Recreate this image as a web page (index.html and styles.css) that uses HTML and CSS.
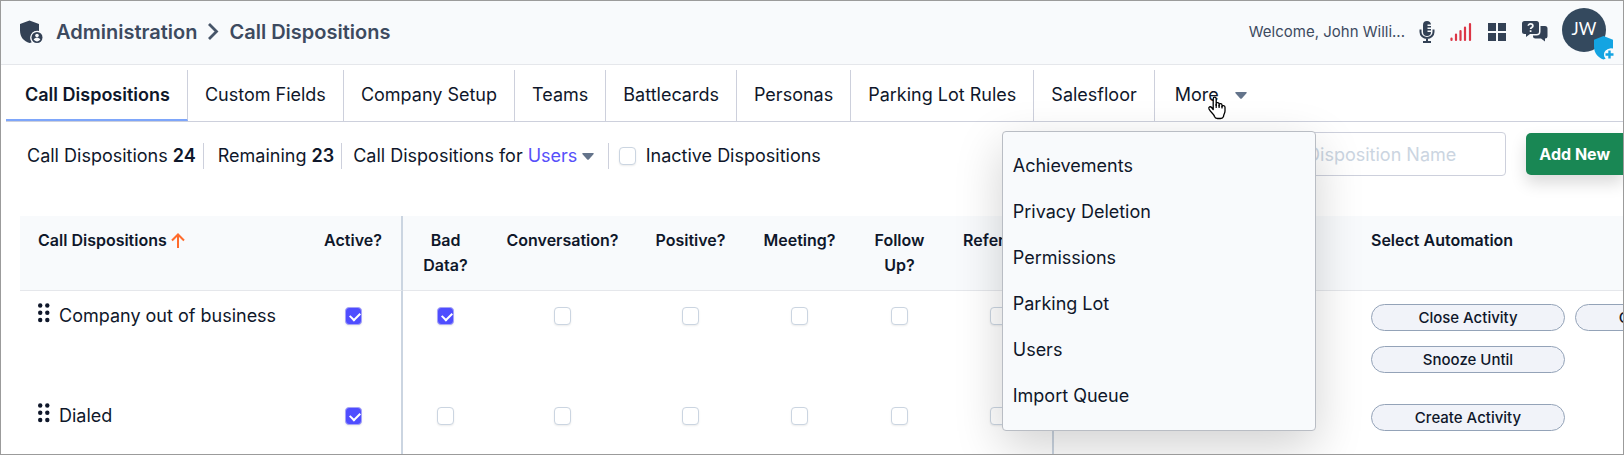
FILE: index.html
```html
<!DOCTYPE html>
<html lang="en">
<head>
<meta charset="utf-8">
<title>Administration - Call Dispositions</title>
<link rel="stylesheet" href="styles.css">
</head>
<body>
<div class="frame">
  <header class="topbar">
    <svg class="topbar-logo" width="24" height="24" viewBox="0 0 24 24" aria-hidden="true">
      <path fill="#334155" d="M10.500 0.500 1 4v6.500C1 17 5 21.500 10.500 23c.8-.2 1.500-.5 2.200-.8A7.200 7.200 0 0 1 20 11V4z"/>
      <circle cx="18" cy="17.500" r="6.600" fill="#f8fafc"/>
      <circle cx="18" cy="17.500" r="5.500" fill="#334155"/>
      <circle cx="18" cy="15.600" r="1.800" fill="#f8fafc"/>
      <path fill="#f8fafc" d="M14.600 19.600c.7-1.300 2-1.800 3.400-1.800s2.700.5 3.400 1.800A4 4 0 0 1 18 21.400a4 4 0 0 1-3.400-1.800z"/>
    </svg>
    <h1 class="crumbs">
      <span>Administration</span>
      <svg width="12" height="18" viewBox="0 0 12 18" aria-hidden="true"><path d="M2 1l7.500 7.500L2 16" fill="none" stroke="#475569" stroke-width="2.800"/></svg>
      <span>Call Dispositions</span>
    </h1>
    <div class="topbar-right">
      <span class="welcome">Welcome, John Willi...</span>
      <svg class="icon-mic" width="16" height="22" viewBox="0 0 16 22" aria-hidden="true">
        <path fill="#334155" d="M8 0a4 4 0 0 0-4 4v7a4 4 0 0 0 8 0H8.500V9.500H12V8H8.500V6.500H12V5H8.500V3.500H12A4 4 0 0 0 8 0z"/>
        <path d="M1.500 8.500V11a6.500 6 0 0 0 13 0V8.500M8 17v3.500M4 21h8" fill="none" stroke="#334155" stroke-width="2"/>
      </svg>
      <svg class="icon-signal" width="22" height="20" viewBox="0 0 22 20" aria-hidden="true"><path d="M1.500 16.500V18M6 12.500V18M10.500 9v9M15 5.500V18M20 2v16" stroke="#dc3545" stroke-width="2.200" stroke-linecap="round"/></svg>
      <svg class="icon-grid" width="18" height="18" viewBox="0 0 18 18" aria-hidden="true"><path fill="#334155" d="M0 0h8v8H0zM10 0h8v8h-8zM0 10h8v8H0zM10 10h8v8h-8z"/></svg>
      <svg class="icon-chat" width="26" height="21" viewBox="0 0 26 21" aria-hidden="true">
        <path fill="#334155" d="M2.500 0h12A2.500 2.500 0 0 1 17 2.500v8a2.500 2.500 0 0 1-2.500 2.500H8l-4 3v-3H2.500A2.500 2.500 0 0 1 0 10.500v-8A2.500 2.500 0 0 1 2.500 0z"/>
        <path fill="#334155" d="M18.500 5H23a2.500 2.500 0 0 1 2.500 2.500V15a2.500 2.500 0 0 1-2.500 2.500v3l-4-3h-5.500A2.500 2.500 0 0 1 11 15v-.5h3.500a4 4 0 0 0 4-4z"/>
        <path d="M6.300 4.800c0-2.500 4.600-2.500 4.600.2 0 1.500-2.300 1.500-2.300 3M8.600 9.300V11" fill="none" stroke="#f8fafc" stroke-width="1.700"/>
      </svg>
      <div class="avatar">JW
        <svg class="avatar-badge" width="21" height="24" viewBox="0 0 21 24" aria-hidden="true">
          <path fill="#14a4e2" d="M9.500 0 0 3.800v6.700C0 17 4 21.500 9.500 23.500c.9-.3 1.700-.6 2.400-1A6.500 6.500 0 0 1 19 12.500V3.800z"/>
          <circle cx="15.500" cy="18.500" r="5.500" fill="#f8fafc"/>
          <path d="M15.500 14.500v8M11.500 18.500h8" stroke="#14a4e2" stroke-width="2.400"/>
        </svg>
      </div>
    </div>
  </header>

  <nav class="tabs">
    <a class="tab tab-active" href="#">Call Dispositions</a>
    <a class="tab" href="#">Custom Fields</a>
    <a class="tab" href="#">Company Setup</a>
    <a class="tab" href="#">Teams</a>
    <a class="tab" href="#">Battlecards</a>
    <a class="tab" href="#">Personas</a>
    <a class="tab" href="#">Parking Lot Rules</a>
    <a class="tab" href="#">Salesfloor</a>
    <div class="more">
      <button class="more-button" type="button">More
        <svg width="12" height="7" viewBox="0 0 12 7" aria-hidden="true"><path fill="#64748b" d="M1 0h10q1 0 .7 1L7 6.300q-1 1-2 0L.3 1Q0 0 1 0z"/></svg>
      </button>
      <svg class="pointer" width="20" height="24" viewBox="0 0 20 24" aria-hidden="true"><path fill="#fff" stroke="#000" stroke-width="1.300" stroke-linejoin="round" d="M6.200 13.500V3c0-2.400 3-2.400 3 0v6.500V7.800c0-1.800 2.900-1.600 2.900.2v2-1.200c0-1.700 2.900-1.500 2.900.3v1.700c0-1.800 3-1.500 3 .5V15c0 2.500-1.500 3.500-1.500 5.500-.5 1.500-1.500 2-3 2h-3c-1.500 0-2.500-.5-3-2-.7-2.500-3.700-4-5.500-7.500-.8-2 1.300-3 2.600-1.500z"/><path d="M9.200 8v4M12.100 9v3M15 10v2.500" stroke="#000" stroke-width="1.200"/></svg>
      <div class="menu">
        <a href="#">Achievements</a>
        <a href="#">Privacy Deletion</a>
        <a href="#">Permissions</a>
        <a href="#">Parking Lot</a>
        <a href="#">Users</a>
        <a href="#">Import Queue</a>
      </div>
    </div>
  </nav>

  <div class="toolbar">
    <div class="stat">Call Dispositions <b>24</b></div>
    <div class="stat stat-remaining">Remaining <b>23</b></div>
    <div class="stat stat-for">
      <label for="audience">Call Dispositions for</label>
      <select id="audience"><option>Users</option></select>
      <svg width="12" height="7" viewBox="0 0 12 7" aria-hidden="true"><path fill="#64748b" d="M1 0h10q1 0 .7 1L7 6.300q-1 1-2 0L.3 1Q0 0 1 0z"/></svg>
    </div>
    <label class="inactive"><input type="checkbox">Inactive Dispositions</label>
    <input class="search" type="text" placeholder="Search By Disposition Name" aria-label="Search by disposition name">
    <button class="add" type="button">Add New</button>
  </div>

  <div class="table-wrap">
    <table>
      <colgroup>
        <col class="c-name"><col class="c-active"><col class="c-bad"><col class="c-conv"><col class="c-pos"><col class="c-meet"><col class="c-follow"><col class="c-ref"><col class="c-gap"><col class="c-auto">
      </colgroup>
      <thead>
        <tr>
          <th class="left">Call Dispositions <svg width="14" height="15" viewBox="0 0 14 15" aria-hidden="true"><path d="M7 15V2M1 7.500l6-6 6 6" fill="none" stroke="#ff6b2c" stroke-width="2"/></svg></th>
          <th class="ruled">Active?</th>
          <th>Bad Data?</th>
          <th>Conversation?</th>
          <th>Positive?</th>
          <th>Meeting?</th>
          <th>Follow Up?</th>
          <th class="ruled">Referral?</th>
          <th></th>
          <th class="auto">Select Automation</th>
        </tr>
      </thead>
      <tbody>
        <tr>
          <td class="left"><span class="name"><svg width="12" height="20" viewBox="0 0 12 20" aria-hidden="true"><g fill="#0f172a"><circle cx="2.200" cy="2.500" r="2.200"/><circle cx="9.300" cy="2.500" r="2.200"/><circle cx="2.200" cy="9.700" r="2.200"/><circle cx="9.300" cy="9.700" r="2.200"/><circle cx="2.200" cy="17" r="2.200"/><circle cx="9.300" cy="17" r="2.200"/></g></svg>Company out of business</span></td>
          <td class="ruled"><input type="checkbox" aria-label="Active" checked></td>
          <td><input type="checkbox" aria-label="Bad data" checked></td>
          <td><input type="checkbox" aria-label="Conversation"></td>
          <td><input type="checkbox" aria-label="Positive"></td>
          <td><input type="checkbox" aria-label="Meeting"></td>
          <td><input type="checkbox" aria-label="Follow up"></td>
          <td class="ruled"><input type="checkbox" aria-label="Referral"></td>
          <td></td>
          <td class="auto"><div class="pills"><button type="button">Close Activity</button><button type="button">Create Activity</button><button type="button">Snooze Until</button></div></td>
        </tr>
        <tr>
          <td class="left"><span class="name"><svg width="12" height="20" viewBox="0 0 12 20" aria-hidden="true"><g fill="#0f172a"><circle cx="2.200" cy="2.500" r="2.200"/><circle cx="9.300" cy="2.500" r="2.200"/><circle cx="2.200" cy="9.700" r="2.200"/><circle cx="9.300" cy="9.700" r="2.200"/><circle cx="2.200" cy="17" r="2.200"/><circle cx="9.300" cy="17" r="2.200"/></g></svg>Dialed</span></td>
          <td class="ruled"><input type="checkbox" aria-label="Active" checked></td>
          <td><input type="checkbox" aria-label="Bad data"></td>
          <td><input type="checkbox" aria-label="Conversation"></td>
          <td><input type="checkbox" aria-label="Positive"></td>
          <td><input type="checkbox" aria-label="Meeting"></td>
          <td><input type="checkbox" aria-label="Follow up"></td>
          <td class="ruled"><input type="checkbox" aria-label="Referral"></td>
          <td></td>
          <td class="auto"><div class="pills"><button type="button">Create Activity</button></div></td>
        </tr>
      </tbody>
    </table>
  </div>
</div>
</body>
</html>
```

FILE: styles.css
```css
* { box-sizing: border-box; }

body {
  margin: 0;
  background: #fff;
  color: #0f172a;
  font: 18px/26px Inter, sans-serif;
}

button, input, select { font: inherit; color: inherit; }
a { color: inherit; text-decoration: none; }
svg { flex: none; }

.frame {
  height: 100vh;
  border: 1px solid #9b9b9b;
  overflow: hidden;
}

.topbar {
  display: flex;
  align-items: center;
  height: 64px;
  padding: 0 17px 2px 18px;
  background: #f8fafc;
  border-bottom: 1px solid #e5e7eb;
}

.crumbs {
  display: flex;
  align-items: center;
  gap: 10px;
  margin: 0 0 0 13px;
  color: #3d4a5f;
  font-size: 20px;
  font-weight: 600;
}

.topbar-right {
  display: flex;
  align-items: center;
  margin-left: auto;
}

.welcome { color: #3d4a5f; font-size: 15px; }
.icon-mic { margin-left: 14px; }
.icon-signal { margin-left: 15px; }
.icon-grid { margin-left: 16px; }
.icon-chat { margin-left: 16px; }

.avatar {
  position: relative;
  width: 44px;
  height: 44px;
  margin: 0 0 4px 14px;
  border-radius: 50%;
  background: #34495e;
  color: #fff;
  font-family: Lato, sans-serif;
  font-size: 17px;
  line-height: 42px;
  text-align: center;
}

.avatar-badge { position: absolute; right: -9px; bottom: -8px; }

.tabs {
  display: flex;
  margin: 5px 0 0 5px;
  border-bottom: 1px solid #cdd0dc;
}

.tab {
  height: 51px;
  padding: 8px 17px 0;
  border-right: 1px solid #cdd0dc;
  line-height: 34px;
  white-space: nowrap;
}

.tab-active {
  padding-left: 19px;
  border-bottom: 2px solid #7ea6fa;
  font-weight: 600;
}

.more { position: relative; }

.more-button {
  display: flex;
  align-items: center;
  gap: 16px;
  padding: 8px 20px 0;
  border: 0;
  background: none;
  line-height: 34px;
}

.pointer { position: absolute; left: 52px; top: 26px; z-index: 3; }

.menu {
  position: absolute;
  top: 61px;
  left: -153px;
  z-index: 2;
  display: flex;
  flex-direction: column;
  gap: 20px;
  width: 314px;
  padding: 21px 10px;
  border: 1px solid #b9bdc4;
  border-radius: 4px;
  background: #f8fafc;
  box-shadow: 0 16px 48px rgba(0, 0, 0, 0.18);
}

.toolbar {
  display: flex;
  align-items: center;
  height: 94px;
  padding: 0 0 26px 26px;
  white-space: nowrap;
}

.stat {
  padding-right: 7px;
  border-right: 1px solid #cdd0dc;
}

.stat b { font-weight: 600; }
.stat-remaining { padding-left: 14px; }

.stat-for {
  display: flex;
  align-items: center;
  padding: 0 14px 0 11px;
}

.stat-for select {
  margin: 0 4px 0 5px;
  padding: 0;
  border: 0;
  background: none;
  color: #5750fa;
  appearance: none;
}

.inactive {
  display: flex;
  align-items: center;
  gap: 10px;
  padding-left: 10px;
}

input[type="checkbox"] {
  display: block;
  width: 17px;
  height: 18px;
  margin: 0;
  border: 1px solid #cbd5e1;
  border-radius: 4px;
  background: #fff;
  box-shadow: 0 1px 2px rgba(0, 0, 0, 0.08);
  appearance: none;
}

input[type="checkbox"]:checked {
  border-color: #a5a3f8;
  background: #4f4dff;
}

input[type="checkbox"]:checked::after {
  content: "";
  display: block;
  width: 8px;
  height: 5px;
  margin: 4px 0 0 4px;
  border: solid #fff;
  border-width: 0 0 2px 2px;
  transform: rotate(-45deg);
}

.search {
  width: 308px;
  height: 44px;
  margin: 0 0 4px auto;
  padding: 0 16px;
  border: 1px solid #cdd0dc;
  border-radius: 4px;
  background: #fff;
}

.search::placeholder { color: #cbd5e1; opacity: 1; }

.add {
  height: 42px;
  margin: 0 0 4px 20px;
  padding: 0 13px;
  border: 0;
  border-radius: 5px 0 0 5px;
  background: #198754;
  box-shadow: 0 8px 16px rgba(0, 0, 0, 0.15);
  color: #fff;
  font-size: 16px;
  font-weight: 700;
}

.table-wrap { margin-left: 19px; }

table {
  width: 1800px;
  border-collapse: separate;
  border-spacing: 0;
  table-layout: fixed;
}

.c-name { width: 285px; }
.c-active { width: 98px; }
.c-bad { width: 85px; }
.c-conv { width: 149px; }
.c-pos { width: 107px; }
.c-meet { width: 111px; }
.c-follow { width: 89px; }
.c-ref { width: 110px; }
.c-gap { width: 301px; }

th {
  height: 75px;
  padding: 12px 4px;
  background: #f8fafc;
  border-bottom: 1px solid #e5e7eb;
  font-size: 16px;
  font-weight: 600;
  line-height: 25px;
  text-align: center;
  vertical-align: top;
}

td {
  height: 100px;
  padding: 12px 4px;
  vertical-align: top;
}

td input[type="checkbox"] { margin: 4px auto 0; }

.ruled { border-right: 2px solid #cbd5e1; }
th.left, td.left { padding-left: 18px; text-align: left; }
th.auto, td.auto { padding-left: 16px; text-align: left; }
td.auto { padding-top: 13px; }
th svg { vertical-align: -2px; }

.name { display: flex; gap: 9px; }

.pills {
  display: flex;
  flex-wrap: wrap;
  gap: 15px 10px;
  width: 400px;
}

.pills button {
  width: 194px;
  height: 27px;
  padding: 0;
  border: 1px solid #94a3b8;
  border-radius: 14px;
  background: #f1f3f9;
  font-size: 15px;
  font-weight: 500;
  line-height: 24px;
}
```
